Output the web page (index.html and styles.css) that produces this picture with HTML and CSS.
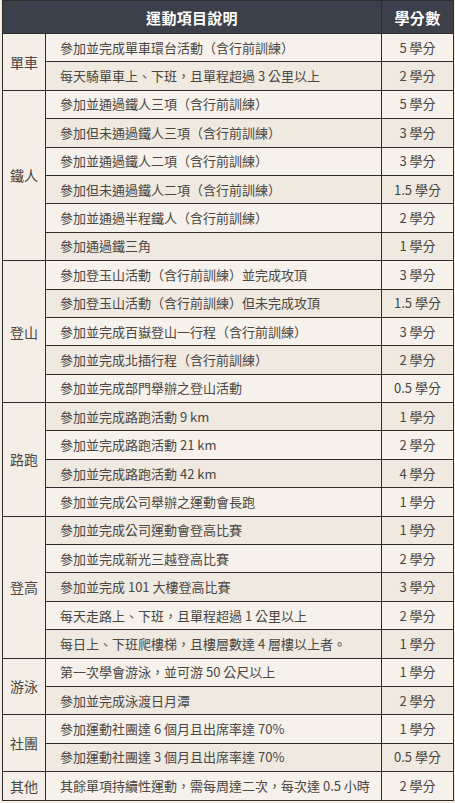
FILE: index.html
```html
<!DOCTYPE html>
<html lang="zh-Hant">
<head>
<meta charset="utf-8">
<link rel="stylesheet" href="styles.css">
</head>
<body>
<table class="credits">
<colgroup><col class="c-cat"><col class="c-desc"><col class="c-pts"></colgroup>
<thead>
<tr><th colspan="2">運動項目說明</th><th>學分數</th></tr>
</thead>
<tbody>
<tr class="odd"><td class="cat" rowspan="2">單車</td><td class="desc">參加並完成單車環台活動（含行前訓練）</td><td class="pts">5 學分</td></tr>
<tr class="even"><td class="desc">每天騎單車上、下班，且單程超過 3 公里以上</td><td class="pts">2 學分</td></tr>

<tr class="odd"><td class="cat" rowspan="6">鐵人</td><td class="desc">參加並通過鐵人三項（含行前訓練）</td><td class="pts">5 學分</td></tr>
<tr class="even"><td class="desc">參加但未通過鐵人三項（含行前訓練）</td><td class="pts">3 學分</td></tr>
<tr class="odd"><td class="desc">參加並通過鐵人二項（含行前訓練）</td><td class="pts">3 學分</td></tr>
<tr class="even"><td class="desc">參加但未通過鐵人二項（含行前訓練）</td><td class="pts">1.5 學分</td></tr>
<tr class="odd"><td class="desc">參加並通過半程鐵人（含行前訓練）</td><td class="pts">2 學分</td></tr>
<tr class="even"><td class="desc">參加通過鐵三角</td><td class="pts">1 學分</td></tr>

<tr class="odd"><td class="cat" rowspan="5">登山</td><td class="desc">參加登玉山活動（含行前訓練）並完成攻頂</td><td class="pts">3 學分</td></tr>
<tr class="even"><td class="desc">參加登玉山活動（含行前訓練）但未完成攻頂</td><td class="pts">1.5 學分</td></tr>
<tr class="odd"><td class="desc">參加並完成百嶽登山一行程（含行前訓練）</td><td class="pts">3 學分</td></tr>
<tr class="even"><td class="desc">參加並完成北插行程（含行前訓練）</td><td class="pts">2 學分</td></tr>
<tr class="odd"><td class="desc">參加並完成部門舉辦之登山活動</td><td class="pts">0.5 學分</td></tr>

<tr class="even"><td class="cat" rowspan="4">路跑</td><td class="desc">參加並完成路跑活動 9 km</td><td class="pts">1 學分</td></tr>
<tr class="odd"><td class="desc">參加並完成路跑活動 21 km</td><td class="pts">2 學分</td></tr>
<tr class="even"><td class="desc">參加並完成路跑活動 42 km</td><td class="pts">4 學分</td></tr>
<tr class="odd"><td class="desc">參加並完成公司舉辦之運動會長跑</td><td class="pts">1 學分</td></tr>

<tr class="even"><td class="cat" rowspan="5">登高</td><td class="desc">參加並完成公司運動會登高比賽</td><td class="pts">1 學分</td></tr>
<tr class="odd"><td class="desc">參加並完成新光三越登高比賽</td><td class="pts">2 學分</td></tr>
<tr class="even"><td class="desc">參加並完成 101 大樓登高比賽</td><td class="pts">3 學分</td></tr>
<tr class="odd"><td class="desc">每天走路上、下班，且單程超過 1 公里以上</td><td class="pts">2 學分</td></tr>
<tr class="even"><td class="desc">每日上、下班爬樓梯，且樓層數達 4 層樓以上者。</td><td class="pts">1 學分</td></tr>

<tr class="odd"><td class="cat" rowspan="2">游泳</td><td class="desc">第一次學會游泳，並可游 50 公尺以上</td><td class="pts">1 學分</td></tr>
<tr class="even"><td class="desc">參加並完成泳渡日月潭</td><td class="pts">2 學分</td></tr>

<tr class="odd"><td class="cat" rowspan="2">社團</td><td class="desc">參加運動社團達 6 個月且出席率達 70%</td><td class="pts">1 學分</td></tr>
<tr class="even"><td class="desc">參加運動社團達 3 個月且出席率達 70%</td><td class="pts">0.5 學分</td></tr>

<tr class="odd"><td class="cat">其他</td><td class="desc">其餘單項持續性運動，需每周達二次，每次達 0.5 小時</td><td class="pts">2 學分</td></tr>
</tbody>
</table>
</body>
</html>
```
FILE: styles.css
```css
html, body {
  margin: 0;
  padding: 0;
  background: #f3ede4;
}
body {
  font-family: "Noto Sans CJK TC", "Noto Sans", sans-serif;
  color: #4a4642;
}
.credits {
  margin-left: 2px;
  width: 451px;
  table-layout: fixed;
  border-collapse: collapse;
  border: 1px solid #2f2c29;
}
.c-cat { width: 43px; }
.c-desc { width: 336px; }
.c-pts { width: 72px; }
.credits th {
  background: #3b404b;
  color: #ffffff;
  font-size: 15px;
  font-weight: 700;
  height: 32px;
  padding: 0;
  text-align: center;
  border: 1px solid #2f2c29;
  letter-spacing: 0.3px;
}
.credits td {
  border: 1px solid #2f2c29;
  font-size: 13px;
  height: 27.4px;
  padding: 0;
  line-height: 16px;
  white-space: nowrap;
}
.odd td { background: #f6f1ea; }
.even td { background: #efe9e0; }
.credits td.cat {
  background: #f4eee6;
  text-align: center;
  font-size: 14px;
}
.credits td.desc {
  padding-left: 14px;
}
.credits td.pts {
  text-align: center;
}
```
